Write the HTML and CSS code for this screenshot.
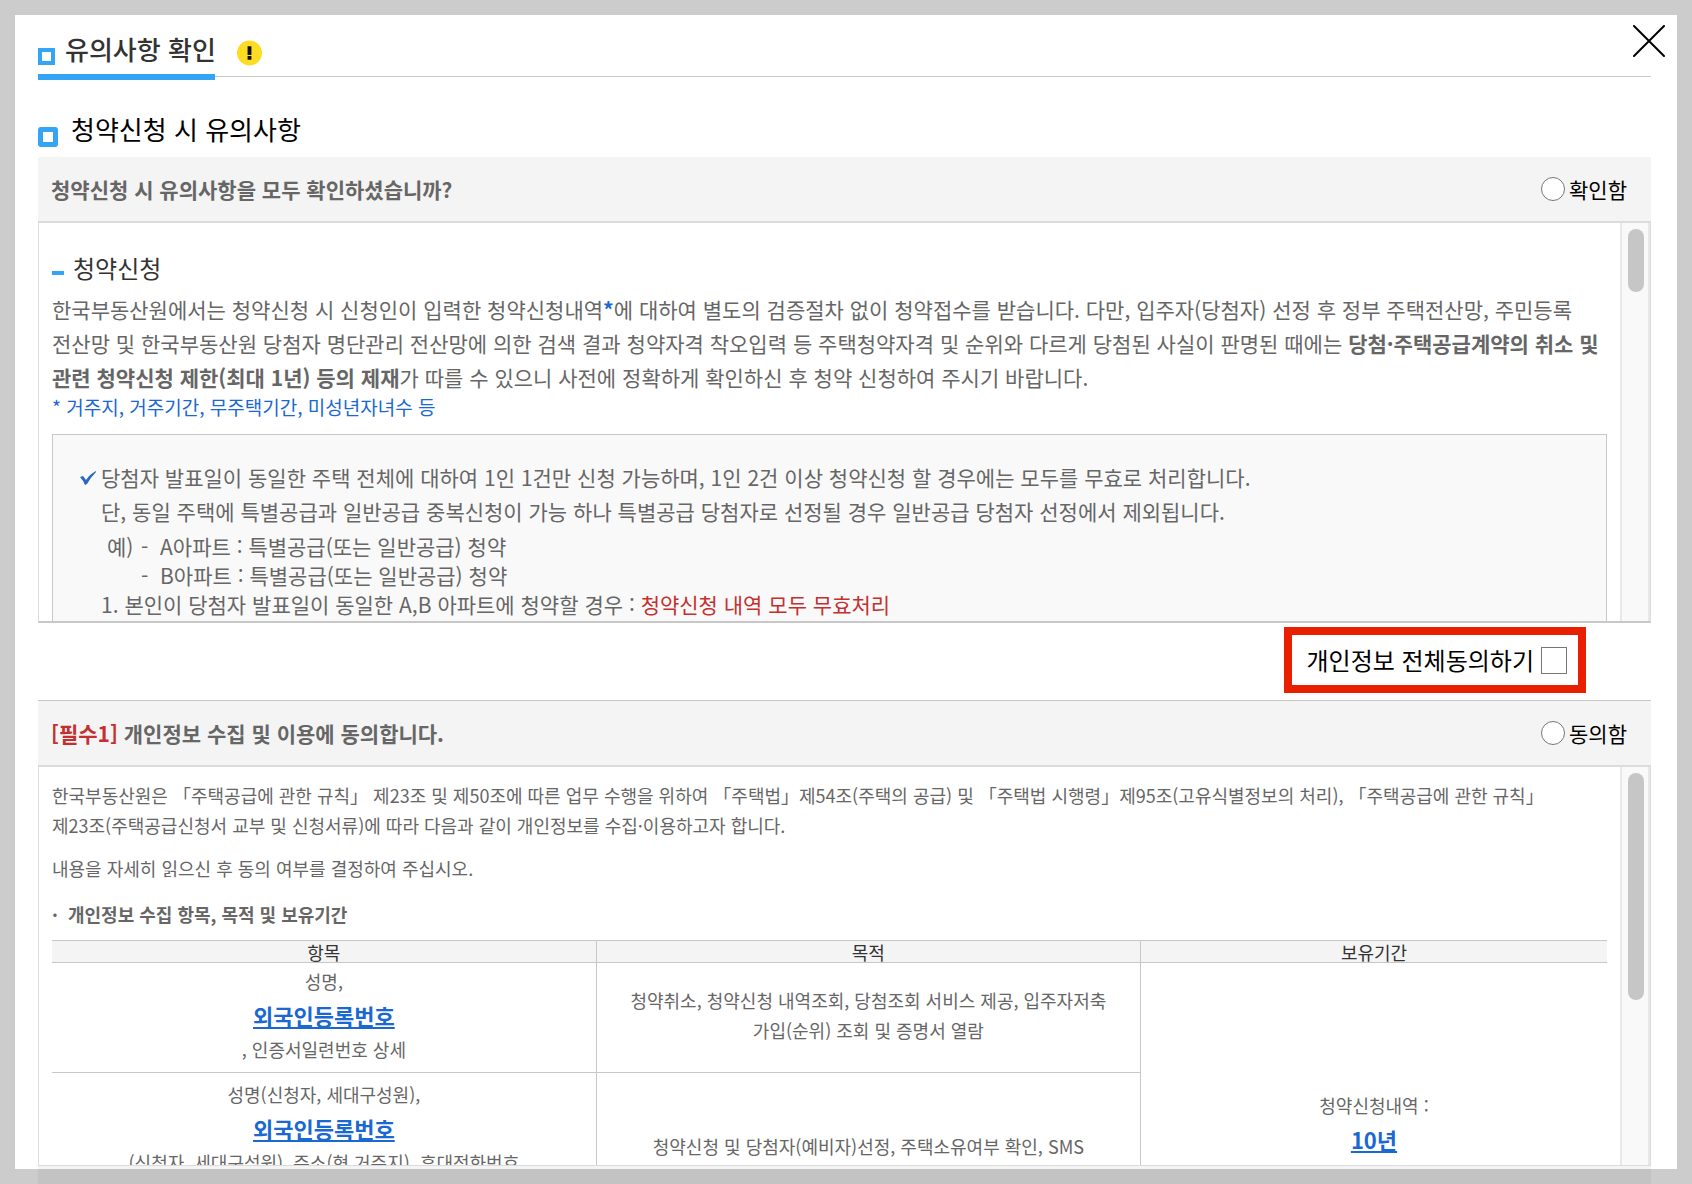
FILE: index.html
```html
<!DOCTYPE html>
<html lang="ko">
<head>
    <meta charset="UTF-8">
    <meta name="viewport" content="width=device-width, initial-scale=1.0">
    <title>유의사항 확인</title>
    <link rel="stylesheet" href="styles.css">
</head>
<body>
    <div class="popup">
        <header class="popup-head">
            <h1 class="popup-title">유의사항 확인</h1>
            <svg class="warn" viewBox="0 0 26 26" aria-hidden="true">
                <circle cx="13" cy="13" r="13" fill="#fddc22"/>
                <path d="M11 6h4v9h-4zM11 16h4v4h-4z" fill="#111"/>
            </svg>
            <button class="close" type="button" aria-label="닫기">
                <svg viewBox="0 0 32 32"><path d="M1 1L31 31M31 1L1 31" stroke="#000" stroke-width="2" stroke-linecap="round"/></svg>
            </button>
        </header>

        <h2 class="section-title">청약신청 시 유의사항</h2>

        <section>
            <div class="bar">
                <strong>청약신청 시 유의사항을 모두 확인하셨습니까?</strong>
                <label class="choice"><input type="radio" name="notice">확인함</label>
            </div>
            <div class="panel">
                <div class="panel-body notice">
                    <h3>청약신청</h3>
                    <p>한국부동산원에서는 청약신청 시 신청인이 입력한 청약신청내역<b class="blue">*</b>에 대하여 별도의 검증절차 없이 청약접수를 받습니다. 다만, 입주자(당첨자) 선정 후 정부 주택전산망, 주민등록<br>
                    전산망 및 한국부동산원 당첨자 명단관리 전산망에 의한 검색 결과 청약자격 착오입력 등 주택청약자격 및 순위와 다르게 당첨된 사실이 판명된 때에는 <b>당첨·주택공급계약의 취소 및<br>
                    관련 청약신청 제한(최대 1년) 등의 제재</b>가 따를 수 있으니 사전에 정확하게 확인하신 후 청약 신청하여 주시기 바랍니다.</p>
                    <p class="note blue">* 거주지, 거주기간, 무주택기간, 미성년자녀수 등</p>
                    <div class="guide">
                        <svg class="check" viewBox="0 0 16 14" aria-hidden="true"><path d="M0 6L3 5L6 9Q10 3 16 0L16 1Q11 6 7 13L5 14Q3 9 0 6Z" fill="#2a66c4"/></svg>
                        <div>
                            <p>당첨자 발표일이 동일한 주택 전체에 대하여 1인 1건만 신청 가능하며, 1인 2건 이상 청약신청 할 경우에는 모두를 무효로 처리합니다.<br>
                            단, 동일 주택에 특별공급과 일반공급 중복신청이 가능 하나 특별공급 당첨자로 선정될 경우 일반공급 당첨자 선정에서 제외됩니다.</p>
                            <dl class="example">
                                <dt>예)</dt>
                                <dd>-&nbsp; A아파트 : 특별공급(또는 일반공급) 청약</dd>
                                <dd>-&nbsp; B아파트 : 특별공급(또는 일반공급) 청약</dd>
                            </dl>
                            <p class="case">1. 본인이 당첨자 발표일이 동일한 A,B 아파트에 청약할 경우 : <span class="red">청약신청 내역 모두 무효처리</span></p>
                        </div>
                    </div>
                </div>
                <div class="track"><div class="thumb"></div></div>
            </div>
        </section>

        <div class="agree-all">
            <label>개인정보 전체동의하기<input type="checkbox" name="agree-all"></label>
        </div>

        <section>
            <div class="bar bar-line">
                <strong><span class="red">[필수1]</span> 개인정보 수집 및 이용에 동의합니다.</strong>
                <label class="choice"><input type="radio" name="required1">동의함</label>
            </div>
            <div class="panel panel-last">
                <div class="panel-body terms">
                    <p>한국부동산원은 「주택공급에 관한 규칙」 제23조 및 제50조에 따른 업무 수행을 위하여 「주택법」제54조(주택의 공급) 및 「주택법 시행령」제95조(고유식별정보의 처리), 「주택공급에 관한 규칙」<br>
                    제23조(주택공급신청서 교부 및 신청서류)에 따라 다음과 같이 개인정보를 수집·이용하고자 합니다.</p>
                    <p>내용을 자세히 읽으신 후 동의 여부를 결정하여 주십시오.</p>
                    <h4>·&nbsp; 개인정보 수집 항목, 목적 및 보유기간</h4>
                    <table>
                        <thead>
                            <tr><th>항목</th><th>목적</th><th>보유기간</th></tr>
                        </thead>
                        <tbody>
                            <tr>
                                <td>성명,<br><em>외국인등록번호</em><br>, 인증서일련번호 상세</td>
                                <td>청약취소, 청약신청 내역조회, 당첨조회 서비스 제공, 입주자저축<br>가입(순위) 조회 및 증명서 열람</td>
                                <td rowspan="2" class="period">청약신청내역 :<br><em>10년</em></td>
                            </tr>
                            <tr class="tall">
                                <td>성명(신청자, 세대구성원),<br><em>외국인등록번호</em><br>(신청자, 세대구성원), 주소(현 거주지), 휴대전화번호</td>
                                <td class="purpose">청약신청 및 당첨자(예비자)선정, 주택소유여부 확인, SMS</td>
                            </tr>
                        </tbody>
                    </table>
                </div>
                <div class="track"><div class="thumb thumb-long"></div></div>
            </div>
        </section>
        <div class="bar"></div>
    </div>
    <div class="dim"></div>
</body>
</html>
```
FILE: styles.css
```css
*,
*::before {
    box-sizing: border-box;
}

body {
    margin: 0;
    height: 100vh;
    overflow: hidden;
    background-color: #fff;
    color: #666;
    font-family: "Noto Sans CJK KR", sans-serif;
    font-size: 21px;
    line-height: 34px;
}

h1, h2, h3, h4, p, dl, dd {
    margin: 0;
}

.popup {
    padding: 15px 41px 0 38px;
}

/* dimmed edge over whatever runs past the popup */
.dim {
    position: fixed;
    inset: 0;
    border: 15px solid rgba(0, 0, 0, 0.2);
    pointer-events: none;
}

.popup-head {
    position: relative;
    display: flex;
    align-items: flex-end;
    gap: 22px;
    height: 62px;
    margin-bottom: 34px;
    border-bottom: 1px solid #c8c8c8;
}

.popup-title {
    display: flex;
    gap: 10px;
    width: 177px;
    height: 50px;
    margin-bottom: -4px;
    border-bottom: 6px solid #34a4f6;
    white-space: nowrap;
    color: #333;
    font-size: 26px;
    font-weight: 500;
    line-height: 38px;
}

.popup-title::before {
    content: "";
    flex: none;
    width: 17px;
    height: 17px;
    margin-top: 18px;
    border: 4px solid #34a4f6;
}

.warn {
    width: 25px;
    height: 26px;
    margin-bottom: 10px;
}

.close {
    position: absolute;
    top: 10px;
    right: -14px;
    width: 32px;
    height: 32px;
    padding: 0;
    border: none;
    background: none;
    cursor: pointer;
}

.close svg {
    display: block;
}

.section-title {
    display: flex;
    gap: 13px;
    height: 46px;
    color: #000;
    font-size: 26px;
    font-weight: 400;
    line-height: 36px;
}

.section-title::before {
    content: "";
    width: 20px;
    height: 20px;
    margin-top: 16px;
    border: 5px solid #34a4f6;
    border-radius: 3px;
}

.bar {
    display: flex;
    justify-content: space-between;
    align-items: center;
    height: 66px;
    padding: 0 24px 0 13px;
    border-bottom: 2px solid #dcdcdc;
    background-color: #f4f4f4;
}

.bar-line {
    height: 67px;
    border-top: 1px solid #c8c8c8;
}

.choice {
    display: flex;
    align-items: center;
    gap: 4px;
    color: #000;
}

input {
    appearance: none;
    margin: 0;
    border: 1px solid #767676;
    background-color: #fff;
}

input[type="radio"] {
    width: 24px;
    height: 24px;
    border-radius: 50%;
}

input[type="checkbox"] {
    width: 26px;
    height: 27px;
}

.panel {
    display: flex;
    height: 400px;
    border: 1px solid #dcdcdc;
    border-top: none;
    border-bottom: 2px solid #c8c8c8;
}

.panel-last {
    height: 399px;
    border-bottom: 1px solid #dcdcdc;
}

.panel-body {
    flex: 1;
    overflow: hidden;
    padding: 0 13px;
}

.track {
    width: 30px;
    padding: 6px 6px 0;
    border-left: 2px solid #e8e8e8;
    border-right: 2px solid #e8e8e8;
    background-color: #f9f9f9;
}

.thumb {
    width: 16px;
    height: 63px;
    border-radius: 8px;
    background-color: #c6c6c6;
}

.thumb-long {
    height: 227px;
}

.blue {
    color: #1a68d1;
}

.red {
    color: #c43030;
}

.notice {
    padding-top: 28px;
    white-space: nowrap;
}

.notice h3 {
    display: flex;
    align-items: center;
    gap: 9px;
    margin-bottom: 7px;
    color: #333;
    font-size: 24px;
    font-weight: 400;
}

.notice h3::before {
    content: "";
    width: 12px;
    height: 4px;
    margin-top: 9px;
    background-color: #34a4f6;
}

.notice .note {
    font-size: 19px;
    line-height: 26px;
}

.guide {
    display: flex;
    gap: 5px;
    margin-top: 14px;
    padding: 25px 27px;
    border: 1px solid #c8c8c8;
    background-color: #f9f9f9;
}

.check {
    flex: none;
    width: 16px;
    height: 14px;
    margin-top: 11px;
}

.example {
    display: grid;
    grid-template-columns: 34px 1fr;
    margin: 4px 0 0 6px;
    line-height: 29px;
}

.example dd {
    grid-column: 2;
}

.case {
    line-height: 29px;
}

.agree-all {
    display: flex;
    justify-content: flex-end;
    padding: 4px 65px 7px 0;
}

.agree-all label {
    display: flex;
    align-items: center;
    gap: 7px;
    height: 66px;
    padding: 0 11px 0 14px;
    border: 8px solid #e82000;
    color: #000;
    font-size: 24px;
}

.terms {
    padding-top: 13px;
    font-size: 18px;
    line-height: 30px;
    white-space: nowrap;
}

.terms p {
    margin-bottom: 13px;
}

.terms h4 {
    margin: 16px 0 11px;
}

table {
    width: 100%;
    table-layout: fixed;
    border-collapse: collapse;
    text-align: center;
}

th {
    width: 35%;
    height: 22px;
    padding: 0;
    border: 1px solid #c8c8c8;
    background-color: #f4f4f4;
    color: #333;
    font-weight: 400;
    line-height: 20px;
}

th:last-child {
    width: 30%;
}

td {
    height: 110px;
    padding: 2px 0 8px;
    border: 1px solid #c8c8c8;
}

th:first-child,
td:first-child {
    border-left: none;
}

th:last-child,
td.period {
    border-right: none;
}

td.period {
    padding-top: 8px;
}

td em {
    color: #1a68d1;
    font-size: 22px;
    font-style: normal;
    font-weight: 700;
    line-height: 38px;
    text-decoration: underline;
}

.tall td {
    height: 212px;
    padding-top: 6px;
    vertical-align: top;
}

.tall .purpose {
    padding-top: 58px;
}
```
